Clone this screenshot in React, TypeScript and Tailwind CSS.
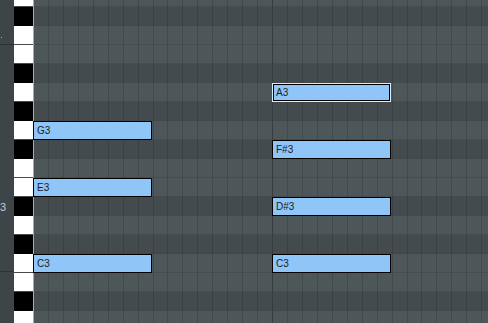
import React from "react";

const ROWS = ["D4","C#4","C4","B3","A#3","A3","G#3","G3","F#3","F3","E3","D#3","D3","C#3","C3","B2","A#2","A2"];
const ROW_H = 19;
const OFFSET = -12;

type Note = { name: string; row: number; left: number; selected?: boolean };
const NOTES: Note[] = [
  { name: "A3", row: 5, left: 238, selected: true },
  { name: "G3", row: 7, left: -1 },
  { name: "F#3", row: 8, left: 238 },
  { name: "E3", row: 10, left: -1 },
  { name: "D#3", row: 11, left: 238 },
  { name: "C3", row: 14, left: -1 },
  { name: "C3", row: 14, left: 238 },
];

const LINES = Array.from({ length: 31 }, (_, i) => i + 1).map((k) => ({
  k,
  x: Math.round(33 + 14.94 * k) - 34,
}));

export default function App() {
  return (
    <div
      className="flex h-[323px] w-[488px] overflow-hidden bg-[#3e4548]"
      style={{ fontFamily: '"Liberation Sans", Arial, sans-serif' }}
    >
      {/* ruler */}
      <div className="flex w-[14px] shrink-0 flex-col bg-[#3e4548]">
        <div className="relative h-[44px] shrink-0">
          <div className="absolute left-[1px] top-[37px] h-px w-px bg-[#a9b3b7]" />
        </div>
        <div className="h-px shrink-0 bg-[#2c3133]" />
        <div className="h-[226px] shrink-0 overflow-visible pt-[157px]">
          <div className="text-[11px] leading-[11px] text-[#c3ccd0]">3</div>
        </div>
        <div className="h-px shrink-0 bg-[#2c3133]" />
        <div className="flex-1" />
      </div>

      {/* keyboard */}
      <div className="flex w-[20px] shrink-0 flex-col border-r border-[#a3acaf] mt-[-12px]">
        {ROWS.map((r, i) => {
          const black = r.includes("#");
          return black ? (
            <div key={i} className="h-[19px] shrink-0 bg-black" />
          ) : (
            <div key={i} className="h-[19px] shrink-0 border-b border-[#4a4a4a] bg-white" />
          );
        })}
      </div>

      {/* grid */}
      <div className="relative flex-1">
        <div className="flex flex-col mt-[-12px]">
          {ROWS.map((r, i) => {
            const black = r.includes("#");
            return black ? (
              <div key={i} className="h-[19px] shrink-0 border-b border-[#41494c] bg-[#434b4e]" />
            ) : (
              <div key={i} className="h-[19px] shrink-0 border-b border-[#454d50] bg-[#4d5659]" />
            );
          })}
        </div>
        <div className="pointer-events-none absolute inset-0">
          {LINES.map((l) => (
            <div
              key={l.k}
              className={
                l.k === 16
                  ? "absolute top-0 h-full w-px bg-[#363d40]"
                  : "absolute top-0 h-full w-px bg-black/[0.13]"
              }
              style={{ left: l.x }}
            />
          ))}
        </div>
        {NOTES.map((n, i) => {
          const top = OFFSET + n.row * ROW_H;
          return n.selected ? (
            <div
              key={i}
              className="absolute h-[19px] w-[119px] border border-[#d2f0ff]"
              style={{ left: n.left, top }}
            >
              <div className="flex h-full w-full items-center border border-black bg-[#8fc5f7] pl-[2px] text-[10px] leading-none text-[#1c2128]">
                {n.name}
              </div>
            </div>
          ) : (
            <div
              key={i}
              className="absolute flex h-[19px] w-[119px] items-center border border-black bg-[#8fc5f7] pl-[3px] text-[10px] leading-none text-[#1c2128]"
              style={{ left: n.left, top }}
            >
              {n.name}
            </div>
          );
        })}
      </div>
    </div>
  );
}
